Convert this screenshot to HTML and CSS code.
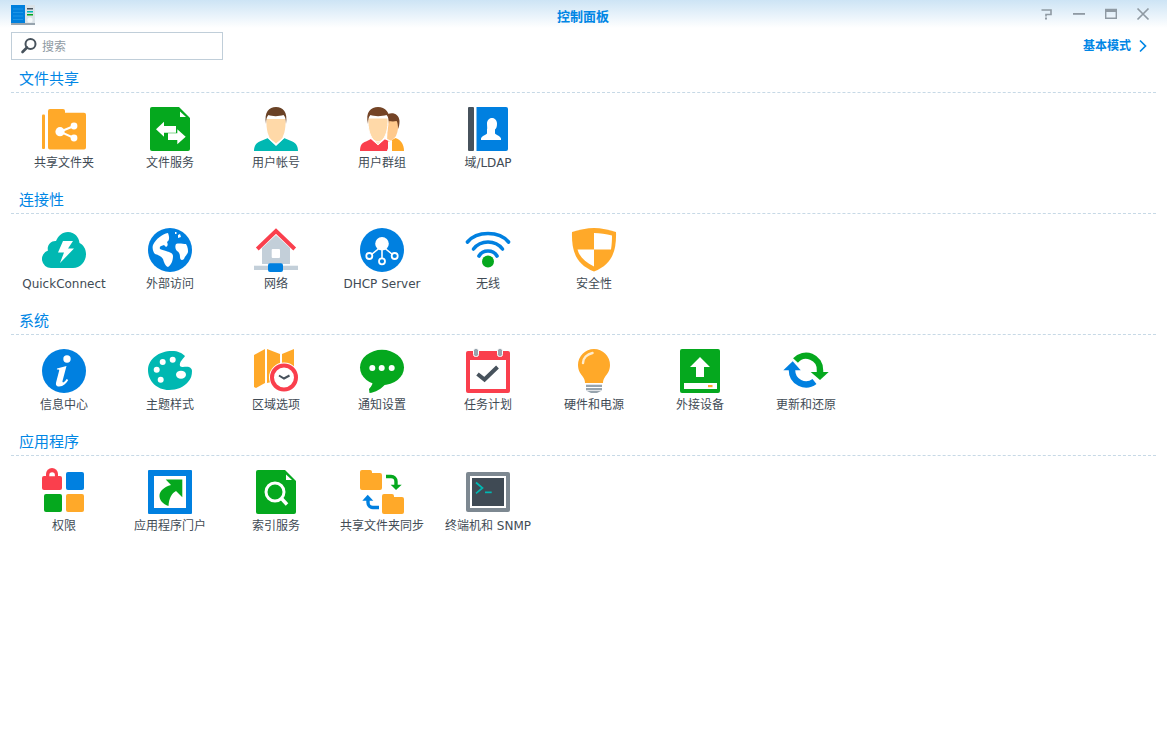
FILE: index.html
```html
<!DOCTYPE html>
<html lang="zh">
<head>
<meta charset="utf-8">
<title>控制面板</title>
<link rel="stylesheet" href="styles.css">
</head>
<body>
<div class="window">
  <header class="titlebar">
    <svg class="app-icon" viewBox="0 0 24 20" width="24" height="20">
      <rect x="0" y="0" width="14" height="18" fill="#0080dd"/>
      <path d="M2 4h10M2 7.500h10M2 11h10M2 14.500h10" stroke="#1c95e6" stroke-width="1"/>
      <rect x="14" y="0" width="10" height="19" fill="#dbe3e8"/>
      <rect x="16" y="3" width="6" height="1.500" fill="#47525c"/>
      <rect x="16" y="6" width="6" height="1.500" fill="#00b8b2"/>
      <rect x="16" y="9" width="6" height="1.500" fill="#05a81e"/>
      <circle cx="19" cy="15" r="2.600" fill="#f4f8fa"/>
      <rect x="0" y="18" width="24" height="2" fill="#97a4ae"/>
    </svg>
    <div class="title">控制面板</div>
    <div class="win-buttons">
      <svg viewBox="0 0 14 14" width="14" height="14"><path d="M1.500 3h9.500v4.500H6v2" fill="none" stroke="#8f9aa3" stroke-width="1.600"/><rect x="5" y="10.500" width="2" height="2" fill="#8f9aa3"/></svg>
      <svg viewBox="0 0 14 14" width="14" height="14"><rect x="1" y="6" width="12" height="1.800" fill="#8f9aa3"/></svg>
      <svg viewBox="0 0 14 14" width="14" height="14"><path d="M1.700 2.500h10.600v8.800H1.700z" fill="none" stroke="#8f9aa3" stroke-width="1.400"/><rect x="1" y="2" width="12" height="3" fill="#8f9aa3"/></svg>
      <svg viewBox="0 0 14 14" width="14" height="14"><path d="M1.500 1.500l11 11M12.500 1.500l-11 11" fill="none" stroke="#8f9aa3" stroke-width="1.700"/></svg>
    </div>
  </header>

  <div class="toolbar">
    <label class="search">
      <svg viewBox="0 0 18 18" width="18" height="18"><circle cx="10.500" cy="7" r="5" fill="none" stroke="#47525c" stroke-width="2"/><path d="M7 10.500l-4.500 4.500" stroke="#47525c" stroke-width="2.600" stroke-linecap="round"/></svg>
      <span>搜索</span>
    </label>
    <a class="mode"><span>基本模式</span><svg viewBox="0 0 10 14" width="10" height="14"><path d="M2 1.500L7.500 7 2 12.500" fill="none" stroke="#0086e5" stroke-width="1.700"/></svg></a>
  </div>

  <section class="group">
    <h2>文件共享</h2>
    <div class="items">
      <div class="item">
        <svg viewBox="0 0 44 44" width="44" height="44"><rect x="0" y="7.500" width="3" height="34.500" rx="1" fill="#ffa929"/><path d="M6 4a2 2 0 0 1 2-2h13a2 2 0 0 1 2 2v1.700h19a2 2 0 0 1 2 2V40.500a2 2 0 0 1-2 2H8a2 2 0 0 1-2-2z" fill="#ffa929"/><path d="M18 24.700L32 19M18 24.700L32 31" stroke="#fff" stroke-width="2"/><circle cx="18" cy="24.700" r="4.600" fill="#fff"/><circle cx="32" cy="19" r="3.400" fill="#fff"/><circle cx="32" cy="31" r="3.400" fill="#fff"/></svg>
        <span>共享文件夹</span>
      </div>
      <div class="item">
        <svg viewBox="0 0 44 44" width="44" height="44"><path d="M4 0h27l11 11v31a2 2 0 0 1-2 2H4a2 2 0 0 1-2-2V2a2 2 0 0 1 2-2z" fill="#05a81e"/><path d="M32 4.500l6 5.500h-6z" fill="#fff"/><path d="M8 22.300l8-7.600v4.300h12v6.700H16v4z" fill="#fff"/><path d="M37.700 29.800l-8.400-7.500v4H20V33h9.300v4.300z" fill="#fff"/></svg>
        <span>文件服务</span>
      </div>
      <div class="item">
        <svg viewBox="0 0 44 44" width="44" height="44"><path d="M0 44C0 38 3 35 8 33.500L14 31l8 7.500L30 31l6 2.500c5 1.500 8 4.500 8 10.500z" fill="#00b8b2"/><path d="M14 30.500L22 38l8-7.500" fill="none" stroke="#fff" stroke-width="1.500"/><path d="M15.500 26h13v4.500L22 36.500l-6.500-6z" fill="#ffd9a8"/><path d="M12.500 12C12 22 14 31 19 34c2 1.300 4 1.300 6 0 5-3 7-12 6.500-22z" fill="#ffd9a8"/><path d="M12 17C10 5 15 0 22 0S34 5 32 17C32 12 31 9 29.500 8 25 9.500 18 9.500 14.500 8 13 9 12 12 12 17z" fill="#6a4226"/></svg>
        <span>用户帐号</span>
      </div>
      <div class="item">
        <svg viewBox="0 0 44 44" width="44" height="44"><path d="M32 44V33l3.500-2c5 1.500 8.500 6 8.500 13z" fill="#ffa929"/><path d="M28 12h10c.8 6 .3 12-2 17-2 3-6 6-9 6z" fill="#ffc98c"/><path d="M28 7c5-2 11 0 11.500 7 0 3-.5 6-1.500 8 0-4-.5-7-1.500-8-2 .5-5 .5-8 0z" fill="#744426"/><path d="M0 44C0 38 2 36 6 34.500L11 32l7 6 7-6 3 1.500V44z" fill="#fa3f4d"/><path d="M11.500 31.500L18 37.500 24.500 31.500l7 3-4 9.500" fill="none" stroke="#fff" stroke-width="1.200"/><path d="M12 26h12v5l-6 6-6-5.500z" fill="#ffd9a8"/><path d="M8 11C7.500 21 10 31 15 34c2 1.300 4 1.300 6 0 5-3 7.500-13 7-23z" fill="#ffd9a8" stroke="#fff" stroke-width="1"/><path d="M8 17C5 5 11 0 18 0s13 5 11 17c0-5-1-8-2.500-9C22 9.500 14 9.500 10.500 8 9 9 8 12 8 17z" fill="#744426"/></svg>
        <span>用户群组</span>
      </div>
      <div class="item">
        <svg viewBox="0 0 44 44" width="44" height="44"><rect x="2" y="0" width="6" height="44" rx="1" fill="#47525c"/><path d="M10.500 0H40a2 2 0 0 1 2 2v40a2 2 0 0 1-2 2H10.500z" fill="#0080e0"/><path d="M21 22.500v4c-1 1.500-5 2-6 5V33h20v-1.500c-1-3-5-3.500-6-5v-4c1.500-1 2-3 2-6 0-3-2-5.500-5-5.500s-5 2.500-5 5.500c0 3 .5 5 0 6z" fill="#fff"/></svg>
        <span>域/LDAP</span>
      </div>
    </div>
  </section>

  <section class="group">
    <h2>连接性</h2>
    <div class="items">
      <div class="item">
        <svg viewBox="0 0 44 44" width="44" height="44"><path d="M9 40a9 9 0 0 1-3-17.500A7.500 7.500 0 0 1 14 13C16 8 20 4 26 4c6.500 0 11 5 11.500 11 4 2 6.500 6 6.500 11 0 8-6 14-13 14z" fill="#00b8b2"/><path d="M21 13h10l-5 7.500h6L18 35l4-10.500h-6z" fill="#fff"/></svg>
        <span>QuickConnect</span>
      </div>
      <div class="item">
        <svg viewBox="0 0 44 44" width="44" height="44"><circle cx="22" cy="22" r="22" fill="#0080e0"/><path d="M20 5c-6 1-12 6-15 12-1 3 0 7 2 9 3 1 6 2 8 5 1 3 2 7 5 8 3-2 5-6 5-11 0-3-4-4-7-5-2-1-5-1-6-2-1-3 2-3 4-4l2 2c2-1 2-3 1-5 2-1 3-4 1-9z" fill="#fff"/><path d="M28 16c3-1 7 0 10 0 2 3 2 6 2 8-1 3-3 4-4 7-2 2-4 1-4-2 0-3-1-5-3-6-2-2-2-5-1-7z" fill="#fff"/><path d="M27 4h1.500v2H27zM30 7l2-1 1 3-3 1z" fill="#fff"/></svg>
        <span>外部访问</span>
      </div>
      <div class="item">
        <svg viewBox="0 0 44 44" width="44" height="44"><path d="M22 7L8 20v16h28V20z" fill="#c3cfd9"/><path d="M3.300 21L22 3 40.700 21" fill="none" stroke="#fa3f4d" stroke-width="4"/><rect x="17.700" y="21" width="8.300" height="9" rx="1" fill="#fff"/><rect x="0" y="37.700" width="44" height="4.300" fill="#c3cfd9"/><rect x="14" y="35.300" width="15" height="8.700" rx="2" fill="#0080e0"/></svg>
        <span>网络</span>
      </div>
      <div class="item">
        <svg viewBox="0 0 44 44" width="44" height="44"><circle cx="22" cy="22" r="22" fill="#0080e0"/><path d="M22 16v17M22 18L9.500 28M22 18l12.500 10" stroke="#fff" stroke-width="1.600" fill="none"/><circle cx="22" cy="15.700" r="6.800" fill="#fff"/><g fill="#0080e0" stroke="#fff" stroke-width="1.800"><circle cx="9.300" cy="28" r="3"/><circle cx="22" cy="33.300" r="3"/><circle cx="34.700" cy="28" r="3"/></g></svg>
        <span>DHCP Server</span>
      </div>
      <div class="item">
        <svg viewBox="0 0 44 44" width="44" height="44"><g fill="none" stroke="#0080e0" stroke-width="3.600" stroke-linecap="round"><path d="M1.500 14C6 8.500 14 5.500 22 5.500S38 8.500 42.500 14"/><path d="M7.500 21C11 16.500 16 14 22 14s11 2.500 14.500 7"/><path d="M13 28c2-3.500 5-5 9-5s7 1.500 9 5"/></g><circle cx="22" cy="33.500" r="6" fill="#05a81e"/></svg>
        <span>无线</span>
      </div>
      <div class="item">
        <svg viewBox="0 0 44 44" width="44" height="44"><path d="M0 4C7 2 15 0 22 0s15 2 22 4c.5 18-3 32-22 39.500C3 36-.5 22 0 4z" fill="#ffa929"/><path d="M22 5c6 0 12 1 18 2.500 0 4.500-.2 9.500-1 14H22zM22 21.500v17C13 34 7.500 29 5.500 21.500z" fill="#fff"/></svg>
        <span>安全性</span>
      </div>
    </div>
  </section>

  <section class="group">
    <h2>系统</h2>
    <div class="items">
      <div class="item">
        <svg viewBox="0 0 44 44" width="44" height="44"><circle cx="22" cy="22" r="22" fill="#0080e0"/><circle cx="25" cy="10" r="3.700" fill="#fff"/><path d="M15 19.500l9.500-2.500-4 15c-.3 1.500.7 1.700 1.500 1 .8-.6 2-2 2.700-3l1.500 1c-2 3.500-5 6.500-9 6.500-3 0-3.700-1.700-3-4.500l3-11.500c.2-1-1-1.300-2.300-1z" fill="#fff"/></svg>
        <span>信息中心</span>
      </div>
      <div class="item">
        <svg viewBox="0 0 44 44" width="44" height="44"><path d="M24 2C11 2 0 10 0 21s9 20 21 20c8 0 15-3 19-8 3-3 4-7 4-11 0-2-1-3-3-4-3-1-7 1-9-1-1-4 3-7 5-10-3-3-7-5-13-5z" fill="#00b8b2"/><g fill="#fff"><circle cx="14.700" cy="13" r="3"/><circle cx="24.700" cy="10.700" r="3"/><circle cx="8.700" cy="20.700" r="3"/><circle cx="12.700" cy="30.700" r="3"/><ellipse cx="33" cy="25.700" rx="5" ry="4"/></g></svg>
        <span>主题样式</span>
      </div>
      <div class="item">
        <svg viewBox="0 0 44 44" width="44" height="44"><path d="M0 6l11-6v34L2 39l-2-1z" fill="#ffa929"/><path d="M13 0l13 5v26l-13 3z" fill="#ffa929"/><path d="M28 5l12-5v24H28z" fill="#ffa929"/><circle cx="30" cy="28.500" r="15" fill="#fff"/><circle cx="30" cy="28.500" r="12" fill="#fff" stroke="#fa3f4d" stroke-width="4"/><path d="M25 26.500l5 3 5.500-3" fill="none" stroke="#47525c" stroke-width="2"/></svg>
        <span>区域选项</span>
      </div>
      <div class="item">
        <svg viewBox="0 0 44 44" width="44" height="44"><ellipse cx="22" cy="18.500" rx="22" ry="17.700" fill="#05a81e"/><path d="M13 31c0 3-1 6-4 9l.5 4C15 43.500 22 40 26 34z" fill="#05a81e"/><circle cx="12.300" cy="19" r="3" fill="#fff"/><circle cx="21.700" cy="19" r="3" fill="#fff"/><circle cx="31.700" cy="19" r="3" fill="#fff"/></svg>
        <span>通知设置</span>
      </div>
      <div class="item">
        <svg viewBox="0 0 44 44" width="44" height="44"><rect x="0" y="2" width="44" height="42" rx="2" fill="#fa3f4d"/><rect x="4" y="11" width="36" height="29" fill="#fff"/><g fill="#97a4ae" stroke="#fff" stroke-width="1"><rect x="7.500" y="-.500" width="5" height="8" rx="2"/><rect x="31.500" y="-.500" width="5" height="8" rx="2"/></g><path d="M11.500 25l7 5.500 13-12.500" fill="none" stroke="#47525c" stroke-width="4"/></svg>
        <span>任务计划</span>
      </div>
      <div class="item">
        <svg viewBox="0 0 44 44" width="44" height="44"><path d="M22 0a16 16 0 0 1 16 16c0 6-3 9-5 12-1.500 2-2 4-2 6H13c0-2-.5-4-2-6-2-3-5-6-5-12A16 16 0 0 1 22 0z" fill="#ffa929"/><path d="M11 14c0-5 4-9 9.500-10" fill="none" stroke="#ffeccc" stroke-width="2.500" stroke-linecap="round"/><rect x="14" y="35.700" width="16" height="2.300" fill="#97a4ae"/><rect x="14" y="39" width="16" height="2.300" fill="#97a4ae"/><path d="M15 42h14l-4 2h-6z" fill="#97a4ae"/></svg>
        <span>硬件和电源</span>
      </div>
      <div class="item">
        <svg viewBox="0 0 44 44" width="44" height="44"><rect x="2" y="0" width="40" height="44" rx="2" fill="#05a81e"/><path d="M22 8l10 10h-6v10h-8V18h-6z" fill="#fff"/><rect x="6" y="34" width="33" height="6" fill="#fff"/><rect x="30" y="36" width="4.500" height="2.200" fill="#ffa929"/></svg>
        <span>外接设备</span>
      </div>
      <div class="item">
        <svg viewBox="0 0 46 44" width="46" height="44"><path d="M12.500 11.500A14 14 0 0 1 37 21.300V24" fill="none" stroke="#05a81e" stroke-width="6.500"/><path d="M27.700 23h18L37 31z" fill="#05a81e"/><path d="M9 20v1.300A14 14 0 0 0 31.500 32.500" fill="none" stroke="#0080e0" stroke-width="6.500"/><path d="M.3 21.300L9.700 12.300l8 9z" fill="#0080e0"/></svg>
        <span>更新和还原</span>
      </div>
    </div>
  </section>

  <section class="group">
    <h2>应用程序</h2>
    <div class="items">
      <div class="item">
        <svg viewBox="0 0 44 44" width="44" height="44"><path d="M4 6.500V4a6 6 0 0 1 12 0v2.500" fill="#fa3f4d"/><rect x="0" y="6" width="20" height="14" rx="2" fill="#fa3f4d"/><path d="M7.300 6.300V5a2.800 2.800 0 0 1 5.600 0v1.300z" fill="#fff"/><rect x="24" y="2" width="18" height="18" rx="2" fill="#0080e0"/><rect x="2" y="24" width="18" height="18" rx="2" fill="#05a81e"/><rect x="24" y="24" width="18" height="18" rx="2" fill="#ffa929"/></svg>
        <span>权限</span>
      </div>
      <div class="item">
        <svg viewBox="0 0 44 44" width="44" height="44"><rect x="0" y="0" width="44" height="44" rx="1" fill="#0080e0"/><rect x="6" y="6" width="32" height="32" fill="#fff"/><path d="M17.700 9.500H34.300V27.300L28 21C24 23 21 28 20.500 36 15 34 11 30 11.500 25 12 21 16 17 23 15z" fill="#05a81e"/></svg>
        <span>应用程序门户</span>
      </div>
      <div class="item">
        <svg viewBox="0 0 44 44" width="44" height="44"><path d="M4 0h27l11 11v31a2 2 0 0 1-2 2H4a2 2 0 0 1-2-2V2a2 2 0 0 1 2-2z" fill="#05a81e"/><path d="M32 4.500l6 5.500h-6z" fill="#fff"/><circle cx="21" cy="22" r="9" fill="none" stroke="#fff" stroke-width="3"/><path d="M27.500 28.500l5.500 6" stroke="#fff" stroke-width="3.500"/></svg>
        <span>索引服务</span>
      </div>
      <div class="item">
        <svg viewBox="0 0 44 44" width="44" height="44"><path d="M0 2a2 2 0 0 1 2-2h8a2 2 0 0 1 2 2v1h8a2 2 0 0 1 2 2v13a2 2 0 0 1-2 2H2a2 2 0 0 1-2-2z" fill="#ffa929"/><path d="M22 26a2 2 0 0 1 2-2h8a2 2 0 0 1 2 2v1h8a2 2 0 0 1 2 2v13a2 2 0 0 1-2 2H24a2 2 0 0 1-2-2z" fill="#ffa929"/><path d="M26 6.500h5c3 0 5 2 5 5v4" fill="none" stroke="#05a81e" stroke-width="3.400"/><path d="M30.700 14.700h11L36 20z" fill="#05a81e"/><path d="M19 37.500h-6c-3 0-5-2-5-5V29" fill="none" stroke="#0080e0" stroke-width="3.400"/><path d="M2.300 30.700l5.400-6 5.600 6z" fill="#0080e0"/></svg>
        <span>共享文件夹同步</span>
      </div>
      <div class="item">
        <svg viewBox="0 0 44 44" width="44" height="44"><rect x="0" y="2" width="44" height="40" rx="2" fill="#7d8891"/><rect x="4" y="6" width="36" height="32" fill="#fff"/><rect x="6" y="8" width="32" height="28" fill="#3f4a54"/><path d="M10 12.500l6.500 5.500-6.500 5.300" fill="none" stroke="#00b8b2" stroke-width="1.700"/><rect x="19" y="21.500" width="6.700" height="1.700" fill="#00b8b2"/></svg>
        <span>终端机和 SNMP</span>
      </div>
    </div>
  </section>
</div>
</body>
</html>
```

FILE: styles.css
```css
* { box-sizing: border-box; }
html, body { margin: 0; padding: 0; background: #fff; }
body {
  font-family: "DejaVu Sans", "Noto Sans CJK SC", sans-serif;
  font-size: 12px;
  color: #414b55;
}
.window { width: 1167px; height: 741px; overflow: hidden; background: #fff; }
.titlebar {
  height: 28px;
  display: grid;
  grid-template-columns: 1fr auto 1fr;
  align-items: center;
  padding: 0 17px 0 11px;
  background: linear-gradient(#cde4f5, #fff);
}
.app-icon { flex: none; margin-top: 2px; }
.title {
  font-size: 13px;
  font-weight: bold;
  color: #0086e5;
  margin: 2px 0 0 5px;
}
.win-buttons { display: flex; gap: 18px; align-items: center; justify-self: end; }
.toolbar {
  height: 40px;
  display: flex;
  align-items: flex-start;
  justify-content: space-between;
  padding: 4px 19px 0 11px;
}
.search {
  width: 212px;
  height: 28px;
  display: flex;
  align-items: center;
  gap: 4px;
  padding-left: 8px;
  border: 1px solid #c0ced9;
  color: #8f9aa3;
}
.search span { margin-bottom: 2px; }
.mode {
  display: flex;
  align-items: center;
  gap: 7px;
  height: 28px;
  font-weight: bold;
  color: #0086e5;
}
.mode span { margin-bottom: 4px; }
.mode svg { margin-bottom: 1px; }
.group { padding: 0 11px; height: 121px; }
.group h2 {
  margin: 0;
  height: 25px;
  line-height: 23px;
  padding-left: 8px;
  font-size: 15px;
  font-weight: normal;
  color: #0086e5;
  border-bottom: 1px dashed #c7d9e6;
}
.items { display: flex; padding-top: 14px; }
.item {
  width: 106px;
  display: flex;
  flex-direction: column;
  align-items: center;
  white-space: nowrap;
}
.item svg { display: block; flex: none; overflow: visible; }
.item span { display: block; margin-top: 5px; line-height: 15px; }
```
